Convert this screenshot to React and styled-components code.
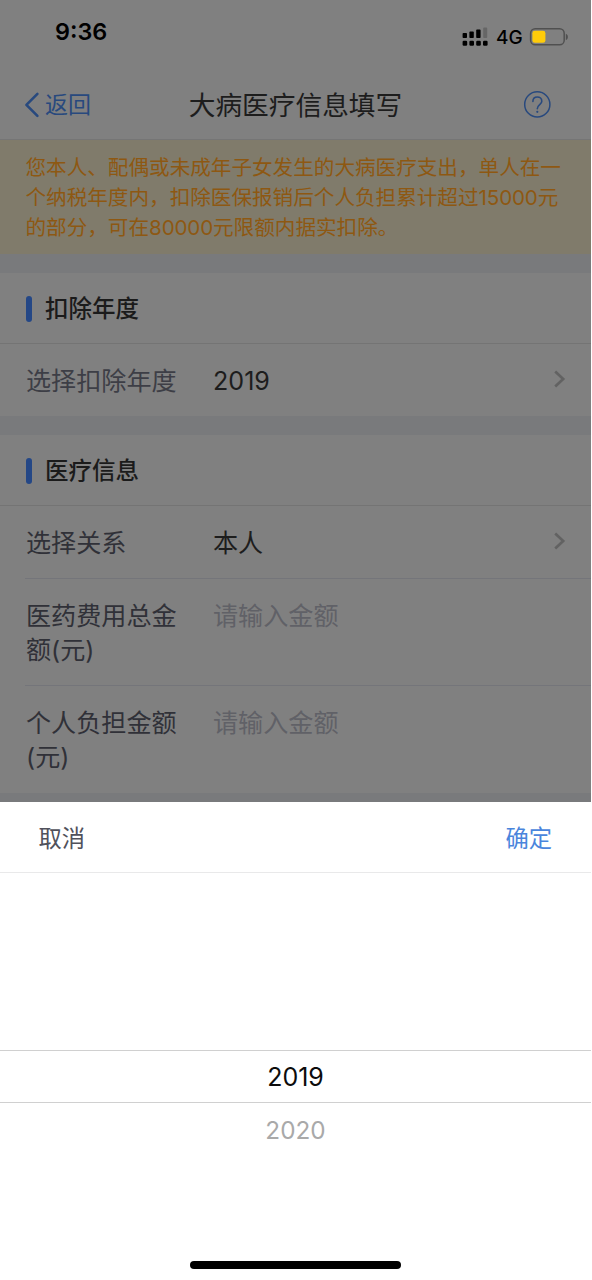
import React from "react";
import styled, { createGlobalStyle } from "styled-components";

function App() {
  return (
    <>
      <GlobalStyle />
      <Page>
        <StatusBar>
          <Time>9:36</Time>
          <StatusIcons>
            <SignalIcon />
            <Network>4G</Network>
            <BatteryIcon />
          </StatusIcons>
        </StatusBar>
        <NavBar>
          <BackButton>
            <svg width="16" height="26" viewBox="0 0 16 26" fill="none">
              <path
                d="M13.4 1.9L2.4 12.8L13.4 23.9"
                stroke="#28497e"
                strokeWidth="2.6"
                strokeLinecap="round"
                strokeLinejoin="round"
              />
            </svg>
            <span>返回</span>
          </BackButton>
          <Title>大病医疗信息填写</Title>
          <HelpButton>
            <HelpIcon />
          </HelpButton>
        </NavBar>

        <Notice>
          <NoticeLine>您本人、配偶或未成年子女发生的大病医疗支出，单人在一</NoticeLine>
          <NoticeLine>
            个纳税年度内，扣除医保报销后个人负担累计超过<Digits>15000</Digits>元
          </NoticeLine>
          <NoticeLine>
            的部分，可在<Digits>80000</Digits>元限额内据实扣除。
          </NoticeLine>
        </Notice>

        <Gap />
        <SectionHead>扣除年度</SectionHead>
        <Row $height={72}>
          <Label $muted>选择扣除年度</Label>
          <Value>2019</Value>
          <Chevron />
        </Row>

        <Gap />
        <SectionHead>医疗信息</SectionHead>
        <Row $height={73} $line>
          <Label>选择关系</Label>
          <Value>本人</Value>
          <Chevron />
        </Row>
        <Row $height={107} $line>
          <Label>
            医药费用总金
            <br />
            额(元)
          </Label>
          <Placeholder>请输入金额</Placeholder>
        </Row>
        <Row $height={107}>
          <Label>
            个人负担金额
            <br />
            (元)
          </Label>
          <Placeholder>请输入金额</Placeholder>
        </Row>
        <Gap $short />

        {/* year picker */}
        <Sheet>
          <SheetHead>
            <SheetButton>取消</SheetButton>
            <SheetButton $primary>确定</SheetButton>
          </SheetHead>
          <Wheel>
            <Option $selected>2019</Option>
            <Option>2020</Option>
          </Wheel>
          <HomeIndicator />
        </Sheet>
      </Page>
    </>
  );
}

function SignalIcon() {
  return (
    <svg width="26" height="20" viewBox="0 0 26 20">
      <g fill="#000">
        <rect x="0.6" y="6" width="4.4" height="5" rx="0.8" />
        <rect x="7.4" y="4.6" width="4.4" height="6.4" rx="0.8" />
        <rect x="14.2" y="2.6" width="4.4" height="8.4" rx="0.8" />
        <rect x="0.6" y="13.8" width="4.6" height="5" rx="1.2" />
        <rect x="7.4" y="13.8" width="4.6" height="5" rx="1.2" />
        <rect x="14.2" y="13.8" width="4.6" height="5" rx="1.2" />
        <rect x="21" y="13.8" width="4.6" height="5" rx="1.2" />
      </g>
      <rect x="21.2" y="0.6" width="4" height="10.4" rx="0.8" fill="#666" />
    </svg>
  );
}

function BatteryIcon() {
  return (
    <svg width="40" height="20" viewBox="0 0 40 20">
      <rect
        x="1.6"
        y="1.8"
        width="33.6"
        height="16"
        rx="4.6"
        fill="none"
        stroke="#505050"
        strokeWidth="1.5"
      />
      <rect x="3.4" y="3.8" width="13" height="12" rx="2.4" fill="#ffcc0a" />
      <path d="M36.8 6.8c1.2.4 2.1 1.6 2.1 3.1s-.9 2.7-2.1 3.1z" fill="#505050" />
    </svg>
  );
}

function HelpIcon() {
  return (
    <svg width="28" height="28" viewBox="0 0 28 28" fill="none" stroke="#28497e">
      <circle cx="14.3" cy="13.4" r="12.6" strokeWidth="1.5" />
      <path
        d="M9.9 10.4C9.9 7.7 11.8 6 14.3 6s4.5 1.7 4.5 4.2c0 3.4-4.5 3.6-4.5 7.6"
        strokeWidth="1.6"
        strokeLinecap="round"
      />
      <circle cx="14.3" cy="20.8" r="1.1" fill="#28497e" stroke="none" />
    </svg>
  );
}

function Chevron() {
  return (
    <ChevronSvg width="12" height="18" viewBox="0 0 12 18" fill="none">
      <path d="M1.2 1.4L9.2 9L1.2 16.6" stroke="#626262" strokeWidth="2.7" />
    </ChevronSvg>
  );
}

const GlobalStyle = createGlobalStyle`
  * {
    box-sizing: border-box;
  }
  body {
    margin: 0;
    background: #fff;
    font-family: "Inter", "Noto Sans CJK SC", sans-serif;
  }
`;

const Page = styled.div`
  width: 591px;
  height: 1280px;
  display: flex;
  flex-direction: column;
  overflow: hidden;
  background: #808080;
  white-space: nowrap;
`;

const StatusBar = styled.div`
  height: 70px;
  flex-shrink: 0;
  display: flex;
  justify-content: space-between;
  padding: 0 22px 0 55px;
  color: #000;
`;

const Time = styled.div`
  margin-top: 17px;
  font-size: 23.4px;
  line-height: 30px;
  font-weight: 600;
`;

const StatusIcons = styled.div`
  height: 20px;
  margin-top: 26.5px;
  display: flex;
  align-items: center;
`;

const Network = styled.span`
  width: 27px;
  margin: 2px 6px 0 8px;
  font-size: 19px;
  line-height: 20px;
  font-weight: 500;
`;

const NavBar = styled.div`
  height: 70px;
  flex-shrink: 0;
  display: grid;
  grid-template-columns: 120px 1fr 120px;
  align-items: center;
  border-bottom: 1px solid #757575;
`;

const BackButton = styled.div`
  display: flex;
  align-items: center;
  gap: 5px;
  padding-left: 24px;
  color: #28497e;
  font-size: 23px;
  line-height: 30px;
`;

const Title = styled.div`
  text-align: center;
  color: #1d1d1d;
  font-size: 26.7px;
  line-height: 36px;
`;

const HelpButton = styled.div`
  display: flex;
  justify-content: flex-end;
  padding-right: 40px;
`;

const Notice = styled.div`
  height: 114px;
  flex-shrink: 0;
  padding: 13px 0 0 25.5px;
  background: #807b6b;
  color: #8e5812;
`;

const NoticeLine = styled.div`
  font-size: 20.6px;
  line-height: 30px;
`;

const Digits = styled.span`
  letter-spacing: -0.15px;
`;

const Gap = styled.div`
  height: ${(props) => (props.$short ? "9px" : "19px")};
  flex-shrink: 0;
  background: #797a7c;
`;

const SectionHead = styled.div`
  height: 71px;
  flex-shrink: 0;
  display: flex;
  align-items: center;
  gap: 13px;
  padding: 2px 0 0 26px;
  border-bottom: 1px solid #747474;
  color: #1b1b1b;
  font-size: 23.5px;
  line-height: 34px;
  font-weight: 500;

  &::before {
    content: "";
    width: 6px;
    height: 26px;
    border-radius: 3px;
    background: #244786;
  }
`;

const Row = styled.div`
  height: ${(props) => props.$height}px;
  flex-shrink: 0;
  display: flex;
  margin-left: 25px;
  padding: 20px 0 0 1px;
  border-bottom: ${(props) => (props.$line ? "1px solid #74757a" : "none")};
  font-size: 25.1px;
  line-height: 34px;
`;

const Label = styled.div`
  width: 187px;
  color: ${(props) => (props.$muted ? "#3d3e46" : "#303138")};
`;

const Value = styled.div`
  flex: 1;
  color: #1d1d1d;
`;

const Placeholder = styled.div`
  color: #606167;
`;

const ChevronSvg = styled.svg`
  margin: 6px 25px 0 0;
`;

const Sheet = styled.div`
  flex: 1;
  display: flex;
  flex-direction: column;
  align-items: center;
  background: #fff;
`;

const SheetHead = styled.div`
  width: 100%;
  height: 71px;
  display: flex;
  justify-content: space-between;
  align-items: center;
  padding: 3px 39px 0 38.5px;
  border-bottom: 1px solid #e9e9ea;
`;

const SheetButton = styled.div`
  color: ${(props) => (props.$primary ? "#4a85dc" : "#50515b")};
  font-size: 23.3px;
  line-height: 34px;
`;

const Wheel = styled.div`
  width: 100%;
  height: 388px;
  padding-top: 177px;
`;

const Option = styled.div`
  height: 53px;
  border: solid #d0d0d0;
  border-width: ${(props) => (props.$selected ? "1px 0" : "0")};
  color: ${(props) => (props.$selected ? "#0c0c0c" : "#a9a9a9")};
  font-size: ${(props) => (props.$selected ? "25px" : "24.3px")};
  line-height: ${(props) => (props.$selected ? "53px" : "55px")};
  text-align: center;
`;

const HomeIndicator = styled.div`
  width: 211px;
  height: 8px;
  border-radius: 4px;
  background: #000;
`;

export default App;
